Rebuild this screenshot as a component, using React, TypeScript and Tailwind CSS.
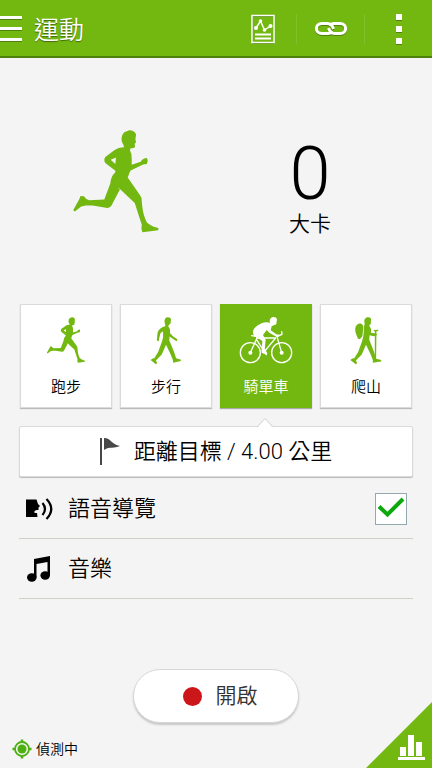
import { useState, type ReactNode } from 'react';

const GREEN = '#73b811';

function Runner({ className }: { className: string }) {
  return (
    <svg viewBox="42 43 256 308" className={className} fill={GREEN} fillRule="evenodd" aria-hidden="true">
      <path d="M194 95L192 86C185 77 185 64 191 54C196 48 204 47 209 44C217 44 229 48 230 58L228 70L230 80L226 84L227 94C223 99 217 97 213 98L212 105Q218 114 217 128L217 147L244 138C248 131 255 127 262 127C266 133 265 139 262 145L251 146L214 164C209 171 208 179 205 185L242 238Q248 245 247 256C249 280 252 300 263 320C273 328 285 334 297 336L296 343L249 349L246 338L247 326L226 261L184 222Q180 216 175 216L182 220L157 268Q152 277 144 276L100 269L80 269L66 272L47 287L42 283L60 250L64 240L74 241Q80 251 90 253L135 251L153 203Q154 182 168 169L168 165L138 142Q132 133 138 124L166 103Q178 94 194 95ZM154 132L168 145L170 125Z" />
    </svg>
  );
}

function Walker() {
  return (
    <svg viewBox="114 60 98 148" className="h-[49px] w-8" fill={GREEN} aria-hidden="true">
      <path d="M160 83C157 76 158 66 166 63C174 62 180 66 178 72L177 82L172 86L170 91C176 96 176 104 175 111L185 122L198 130L196 136L188 132L174 122L173 133L188 170L194 188L209 193L208 197L185 202L184 194L177 176L163 147L150 177L132 195L136 203L132 207L116 194L122 189L127 188L139 169L151 136L154 124L154 106L146 112L142 128L141 136L135 134L137 111C140 99 150 92 161 90Z" />
    </svg>
  );
}

function Hiker() {
  return (
    <svg viewBox="114 60 98 148" className="h-[49px] w-8" fill={GREEN} aria-hidden="true">
      <path d="M159 82C156 75 158 66 166 63C174 61 181 66 178 73L178 83L173 87L174 91C180 97 179 104 178 110L189 112L196 114L195 119L187 121L174 118L173 132L188 170L194 190L210 194L209 198L184 202L184 194L177 176L163 147L150 177L132 195L136 203L132 207L115 194L121 189L127 188L139 169L151 136L155 120L157 91Z" />
      <path d="M147 82C137 81 130 88 130 101C129 111 136 119 138 128L144 130L152 121L155 91Q152 84 147 82Z" />
      <path d="M187 102L200 101L201 105L195 106L194 191L190 190L190 106L187 105Z" />
    </svg>
  );
}

function Cyclist() {
  return (
    <svg viewBox="82 62 162 144" className="h-12 w-[54px]" fill="none" stroke="white" strokeWidth="4" strokeLinecap="round" strokeLinejoin="round" aria-hidden="true">
      <circle cx="116" cy="172" r="30" />
      <circle cx="210" cy="172" r="30" />
      <path d="M116 172L136 128L192 128L158 169L134 132M210 172L196 124L192 120M120 121L136 123M196 124L211 117L210 109M136 128L133 120M158 169L164 178" />
      <g fill="white" stroke="none">
        <circle cx="116" cy="172" r="6" />
        <circle cx="210" cy="172" r="6" />
        <circle cx="157" cy="167" r="7" />
        <path d="M175 83C172 75 176 66 184 65C193 64 198 70 195 78L194 87L186 90L180 93L177 105L194 117L203 118L202 123L190 122L173 112L165 104L154 119L162 133L159 163L167 173L165 178L150 172L150 164L152 137L128 121C122 115 123 105 129 98C140 86 157 80 167 81Z" />
      </g>
    </svg>
  );
}

const activities: { id: string; label: string; icon: ReactNode }[] = [
  { id: 'run', label: '跑步', icon: <Runner className="h-[46px] w-10" /> },
  { id: 'walk', label: '步行', icon: <Walker /> },
  { id: 'bike', label: '騎單車', icon: <Cyclist /> },
  { id: 'hike', label: '爬山', icon: <Hiker /> },
];

function Header() {
  return (
    <header className="flex h-[58px] items-center border-b-2 border-[#4e810d] bg-[#73b811] pt-0.5 text-white">
      <button aria-label="選單" className="h-full w-[22px]">
        <svg viewBox="0 0 22 26" className="h-[26px] w-[22px]" aria-hidden="true">
          <path d="M0 1h22v3H0zM0 12h22v3H0zM0 23h22v3H0z" fill="#4e810d" />
          <path d="M0 0h22v3H0zM0 11h22v3H0zM0 22h22v3H0z" fill="white" />
        </svg>
      </button>
      <h1 className="ml-3 flex-1 pt-1 text-[25px] leading-8 font-[350] [text-shadow:0_1px_1px_#3e680a]">運動</h1>
      <button aria-label="記錄" className="flex h-[30px] w-[68px] items-center justify-center border-r border-[#80c02c]">
        <svg viewBox="0 0 24 30" className="h-[30px] w-6" fill="none" stroke="white" aria-hidden="true">
          <path d="M1.5 2.5h21v27h-21z" stroke="#4e810d" strokeWidth="1" />
          <path d="M1 1.5h22v27H1z" strokeWidth="1.5" />
          <path d="M5 14L9.500 7L13.500 16L19.500 12" strokeWidth="1.500" />
          <path d="M4 20.500h16M4 24.500h16" strokeWidth="2" />
          <g fill="white" stroke="none">
            <circle cx="5" cy="14" r="2" />
            <circle cx="9.500" cy="7" r="1.800" />
            <circle cx="13.500" cy="16" r="1.800" />
            <circle cx="19.500" cy="12" r="2" />
          </g>
        </svg>
      </button>
      <button aria-label="連結" className="flex h-[30px] w-[68px] items-center justify-center border-r border-[#80c02c]">
        <svg viewBox="0 0 34 16" className="h-4 w-[34px]" fill="none" strokeWidth="3" aria-hidden="true">
          <g stroke="#4e810d" transform="translate(0 1)">
            <path d="M17 12.500H8C0.500 12.500 0.500 2.500 8 2.500h5C17 2.500 18 5 19.500 8" />
            <path d="M17 2.500h9C33.500 2.500 33.500 12.500 26 12.500h-5C17 12.500 16 10 14.500 7" />
          </g>
          <g stroke="white">
            <path d="M18 10C17 12 16 12.500 14 12.500H8C0.500 12.500 0.500 2.500 8 2.500h5C17 2.500 18 4 19.500 8" />
            <path d="M16 5C17 3 18 2.500 20 2.500h6C33.500 2.500 33.500 12.500 26 12.500h-5C17 12.500 16 11 14.500 7" />
          </g>
        </svg>
      </button>
      <button aria-label="更多" className="flex h-full w-[67px] items-center justify-center">
        <svg viewBox="0 0 6 31" className="h-[31px] w-1.5" aria-hidden="true">
          <path d="M0 1h6v6H0zM0 13h6v6H0zM0 25h6v6H0z" fill="#4e810d" />
          <path d="M0 0h6v6H0zM0 12h6v6H0zM0 24h6v6H0z" fill="white" />
        </svg>
      </button>
    </header>
  );
}

export default function App() {
  const [selected, setSelected] = useState('bike');

  return (
    <div className="flex min-h-screen flex-col bg-[#f4f4f4] font-[Roboto,'Noto_Sans_CJK_TC',sans-serif] text-black">
      <Header />

      <main className="flex flex-1 flex-col px-[19px]">
        <section className="grid h-[246px] grid-cols-2 pr-1.5">
          <div className="flex justify-center pt-18">
            <Runner className="h-[103px] w-[86px]" />
          </div>
          <div className="flex flex-col items-center pt-20">
            <span className="text-[74px] leading-[72px] font-light">0</span>
            <span className="pt-0.5 text-[21px] leading-6 font-[350]">大卡</span>
          </div>
        </section>

        <section className="grid grid-cols-4 gap-2 px-px" aria-label="運動類型">
          {activities.map((a) => (
            <button
              key={a.id}
              aria-pressed={a.id === selected}
              onClick={() => setSelected(a.id)}
              className={
                a.id === selected
                  ? 'flex h-26 flex-col items-center border border-[#73b811] bg-[#73b811] text-white shadow-[0_1px_1px_#aaaaaa]'
                  : 'flex h-26 flex-col items-center border border-[#dadada] bg-white shadow-[0_1px_1px_#bbbbbb]'
              }
            >
              <span className="mt-2.5 flex h-[50px] items-center">{a.icon}</span>
              <span className="mt-3 text-[15px] leading-5 font-[350]">{a.label}</span>
            </button>
          ))}
        </section>

        <div className="relative mt-[18px]">
          <button className="flex h-[51px] w-full items-center justify-center gap-3.5 rounded-[2px] border border-[#dadada] bg-white shadow-[0_1px_1px_#bbbbbb]">
            <svg viewBox="0 0 20 27" className="h-[27px] w-5" aria-hidden="true">
              <path d="M0 0h2v27H0zM4 0C11 0 12 7 20 8C14 11 10 8 4 12Z" fill="#484848" />
            </svg>
            <span className="text-[22px] leading-7 font-[350] whitespace-pre">距離目標 / 4.00 公里</span>
          </button>
          <svg viewBox="0 0 16 10" className="absolute -top-2 left-5/8 h-2.5 w-4 -translate-x-1/2" aria-hidden="true">
            <path d="M1 9L8 1L15 9V10H1Z" fill="white" />
            <path d="M0 9L8 0.500L16 9" fill="none" stroke="#d0d0d0" />
          </svg>
        </div>

        <label className="mt-0.5 flex h-15 items-center border-b border-[#d0d0c8] px-1.5">
          <svg viewBox="0 0 28 22" className="mr-3.5 ml-px h-[22px] w-7" fill="none" stroke="black" strokeWidth="2.2" aria-hidden="true">
            <path d="M0 1.500H10.500L12 6L14 8L12.500 9.500V12H10.500L8.500 13V15H11L11.500 19H0Z" fill="black" stroke="none" />
            <path d="M16.500 5Q21.500 11 16.500 17M20.500 1Q30 11 20.500 21" />
          </svg>
          <span className="flex-1 text-[22px] leading-7 font-[350]">語音導覽</span>
          <span className="grid">
            <input
              type="checkbox"
              defaultChecked
              className="peer col-start-1 row-start-1 size-8 appearance-none border border-[#93a9af] bg-white"
            />
            <svg viewBox="0 0 32 32" className="pointer-events-none invisible col-start-1 row-start-1 size-8 peer-checked:visible" aria-hidden="true">
              <path d="M4 13.500L12.500 21.500L28 6" fill="none" stroke="#0da80d" strokeWidth="4" />
            </svg>
          </span>
        </label>

        <button className="flex h-15 items-center border-b border-[#d0d0c8] px-1.5 text-left">
          <svg viewBox="-1 0 28 26" className="mr-3.5 ml-px h-[26px] w-7" aria-hidden="true">
            <path d="M7 3L23 0V19H20.500V6L9.500 8V21H7Z" />
            <ellipse cx="4.800" cy="21.500" rx="4.800" ry="4.200" />
            <ellipse cx="18.200" cy="19.500" rx="4.800" ry="4.200" />
          </svg>
          <span className="text-[22px] leading-7 font-[350]">音樂</span>
        </button>
      </main>

      <footer className="mt-12 grid h-[99px] grid-cols-[1fr_auto_1fr]">
        <div className="flex items-center gap-1 self-end pb-2 pl-3 text-sm leading-[22px] font-[350]">
          <svg viewBox="0 0 20 20" className="size-5" fill="none" stroke="#4cb010" aria-hidden="true">
            <circle cx="10" cy="10" r="7" strokeWidth="1.800" />
            <circle cx="10" cy="10" r="4.500" fill="#4cb010" stroke="none" />
            <path d="M10 0.500V3M10 17V19.500M0.500 10H3M17 10H19.500" strokeWidth="2.500" />
          </svg>
          <span>偵測中</span>
        </div>
        <button className="flex h-[54px] w-[166px] items-center justify-center gap-3.5 rounded-full border border-[#d8d8d8] bg-white pl-2 text-[21px] leading-7 font-[350] text-[#333333] shadow-[0_2px_2px_#c8c8c8]">
          <span className="size-[19px] rounded-full bg-[#cb1719]" />
          開啟
        </button>
        <button aria-label="統計" className="flex size-[66px] items-end justify-end self-end justify-self-end bg-[#73b811] pr-[7px] pb-2 [clip-path:polygon(100%_0,100%_100%,0_100%)]">
          <svg viewBox="0 0 27 25" className="h-[25px] w-[27px]" fill="white" aria-hidden="true">
            <path d="M2 12h6v9H2zM10 0h6v21h-6zM18 7h6v14h-6zM0 22h27v3H0z" />
          </svg>
        </button>
      </footer>
    </div>
  );
}
